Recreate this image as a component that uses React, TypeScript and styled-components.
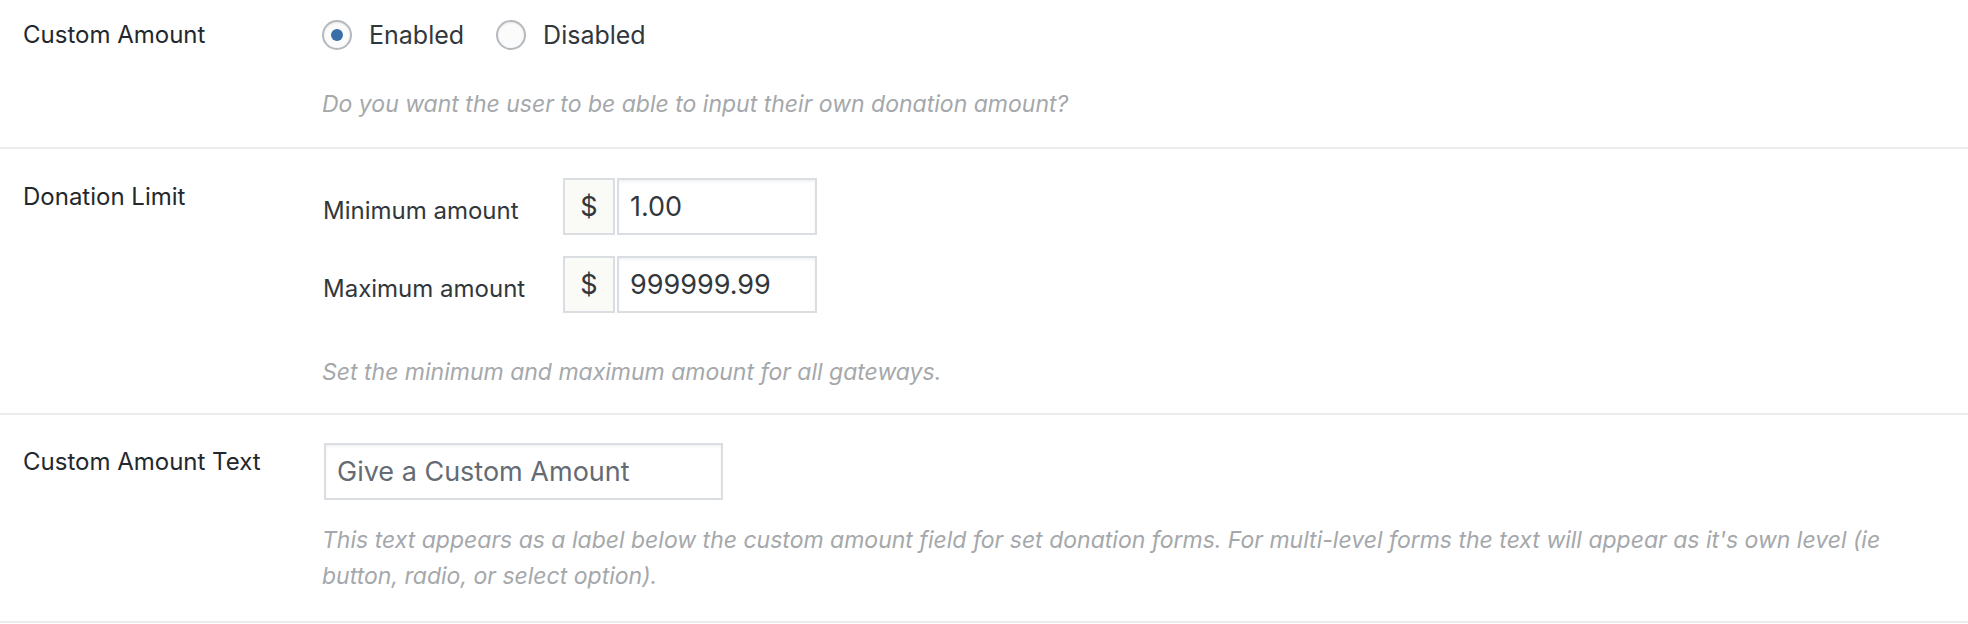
import React from 'react';
import styled, { createGlobalStyle } from 'styled-components';

const GlobalStyle = createGlobalStyle`
  html, body {
    margin: 0;
    padding: 0;
    background: #ffffff;
  }

  body {
    font-family: Inter, "Noto Sans", sans-serif;
    color: #23282d;
  }
`;

const Table = styled.div`
  width: 100%;
`;

const Row = styled.div`
  display: grid;
  grid-template-columns: 322px 1fr;
  border-bottom: 2px solid #ececec;
`;

const Label = styled.div<{ $top: number }>`
  padding: ${(p) => p.$top}px 0 0 23px;
  font-size: 24px;
  line-height: 34px;
  color: #23282d;
`;

const Field = styled.div<{ $top: number; $bottom: number }>`
  padding: ${(p) => p.$top}px 0 ${(p) => p.$bottom}px 0;
  display: flex;
  flex-direction: column;
  align-items: flex-start;
`;

const RadioGroup = styled.div`
  display: flex;
  align-items: center;
  height: 34px;
  gap: 32px;
`;

const RadioOption = styled.label`
  display: flex;
  align-items: center;
  gap: 17px;
  font-size: 25px;
  line-height: 34px;
  color: #32373c;
  cursor: pointer;
`;

const RadioCircle = styled.span<{ $checked?: boolean }>`
  width: 30px;
  height: 30px;
  box-sizing: border-box;
  border-radius: 50%;
  border: 2px solid #b4b9be;
  background: #fbfbfb;
  box-shadow: inset 0 1px 2px rgba(0, 0, 0, 0.08);
  display: flex;
  align-items: center;
  justify-content: center;

  &::after {
    content: '';
    width: 12px;
    height: 12px;
    border-radius: 50%;
    background: #3a6ea8;
    display: ${(p) => (p.$checked ? 'block' : 'none')};
  }
`;

const Description = styled.p<{ $top: number }>`
  margin: ${(p) => p.$top}px 0 0 0;
  font-size: 23px;
  line-height: 36px;
  font-style: italic;
  color: #a5a8ab;
  max-width: 1640px;
`;

const AmountRow = styled.div`
  display: flex;
  align-items: center;

  & + & {
    margin-top: 21px;
  }
`;

const AmountLabel = styled.span`
  width: 240px;
  padding-left: 1px;
  font-size: 24px;
  line-height: 34px;
  color: #32373c;
  padding-top: 8px;
`;

const Prefix = styled.span`
  width: 52px;
  height: 57px;
  box-sizing: border-box;
  border: 2px solid #dadee3;
  background: #fafaf6;
  display: flex;
  align-items: center;
  justify-content: center;
  font-size: 27px;
  color: #32373c;
  margin-right: 2px;
`;

const TextInput = styled.input<{ $width: number; $muted?: boolean; $indent?: number }>`
  width: ${(p) => p.$width}px;
  height: 57px;
  box-sizing: border-box;
  border: 2px solid #dadee3;
  background: #ffffff;
  box-shadow: inset 0 2px 3px rgba(0, 0, 0, 0.05);
  padding: 0 11px;
  margin: 0 0 0 ${(p) => p.$indent || 0}px;
  font-family: Inter, "Noto Sans", sans-serif;
  font-size: 27px;
  color: ${(p) => (p.$muted ? '#646b73' : '#32373c')};
  outline: none;
`;

const App = () => {
  return (
    <>
      <GlobalStyle />
      <Table>
        <Row>
          <Label $top={18}>Custom Amount</Label>
          <Field $top={18} $bottom={25}>
            <RadioGroup>
              <RadioOption>
                <RadioCircle $checked />
                Enabled
              </RadioOption>
              <RadioOption>
                <RadioCircle />
                Disabled
              </RadioOption>
            </RadioGroup>
            <Description $top={34}>
              Do you want the user to be able to input their own donation amount?
            </Description>
          </Field>
        </Row>

        <Row>
          <Label $top={31}>Donation Limit</Label>
          <Field $top={29} $bottom={23}>
            <AmountRow>
              <AmountLabel>Minimum amount</AmountLabel>
              <Prefix>$</Prefix>
              <TextInput $width={200} defaultValue="1.00" />
            </AmountRow>
            <AmountRow>
              <AmountLabel>Maximum amount</AmountLabel>
              <Prefix>$</Prefix>
              <TextInput $width={200} defaultValue="999999.99" />
            </AmountRow>
            <Description $top={41}>
              Set the minimum and maximum amount for all gateways.
            </Description>
          </Field>
        </Row>

        <Row>
          <Label $top={30}>Custom Amount Text</Label>
          <Field $top={28} $bottom={27}>
            <TextInput $width={399} $muted $indent={2} defaultValue="Give a Custom Amount" />
            <Description $top={22}>
              This text appears as a label below the custom amount field for set donation forms. For
              multi-level forms the text will appear as it's own level (ie button, radio, or select
              option).
            </Description>
          </Field>
        </Row>
      </Table>
    </>
  );
};

export default App;
